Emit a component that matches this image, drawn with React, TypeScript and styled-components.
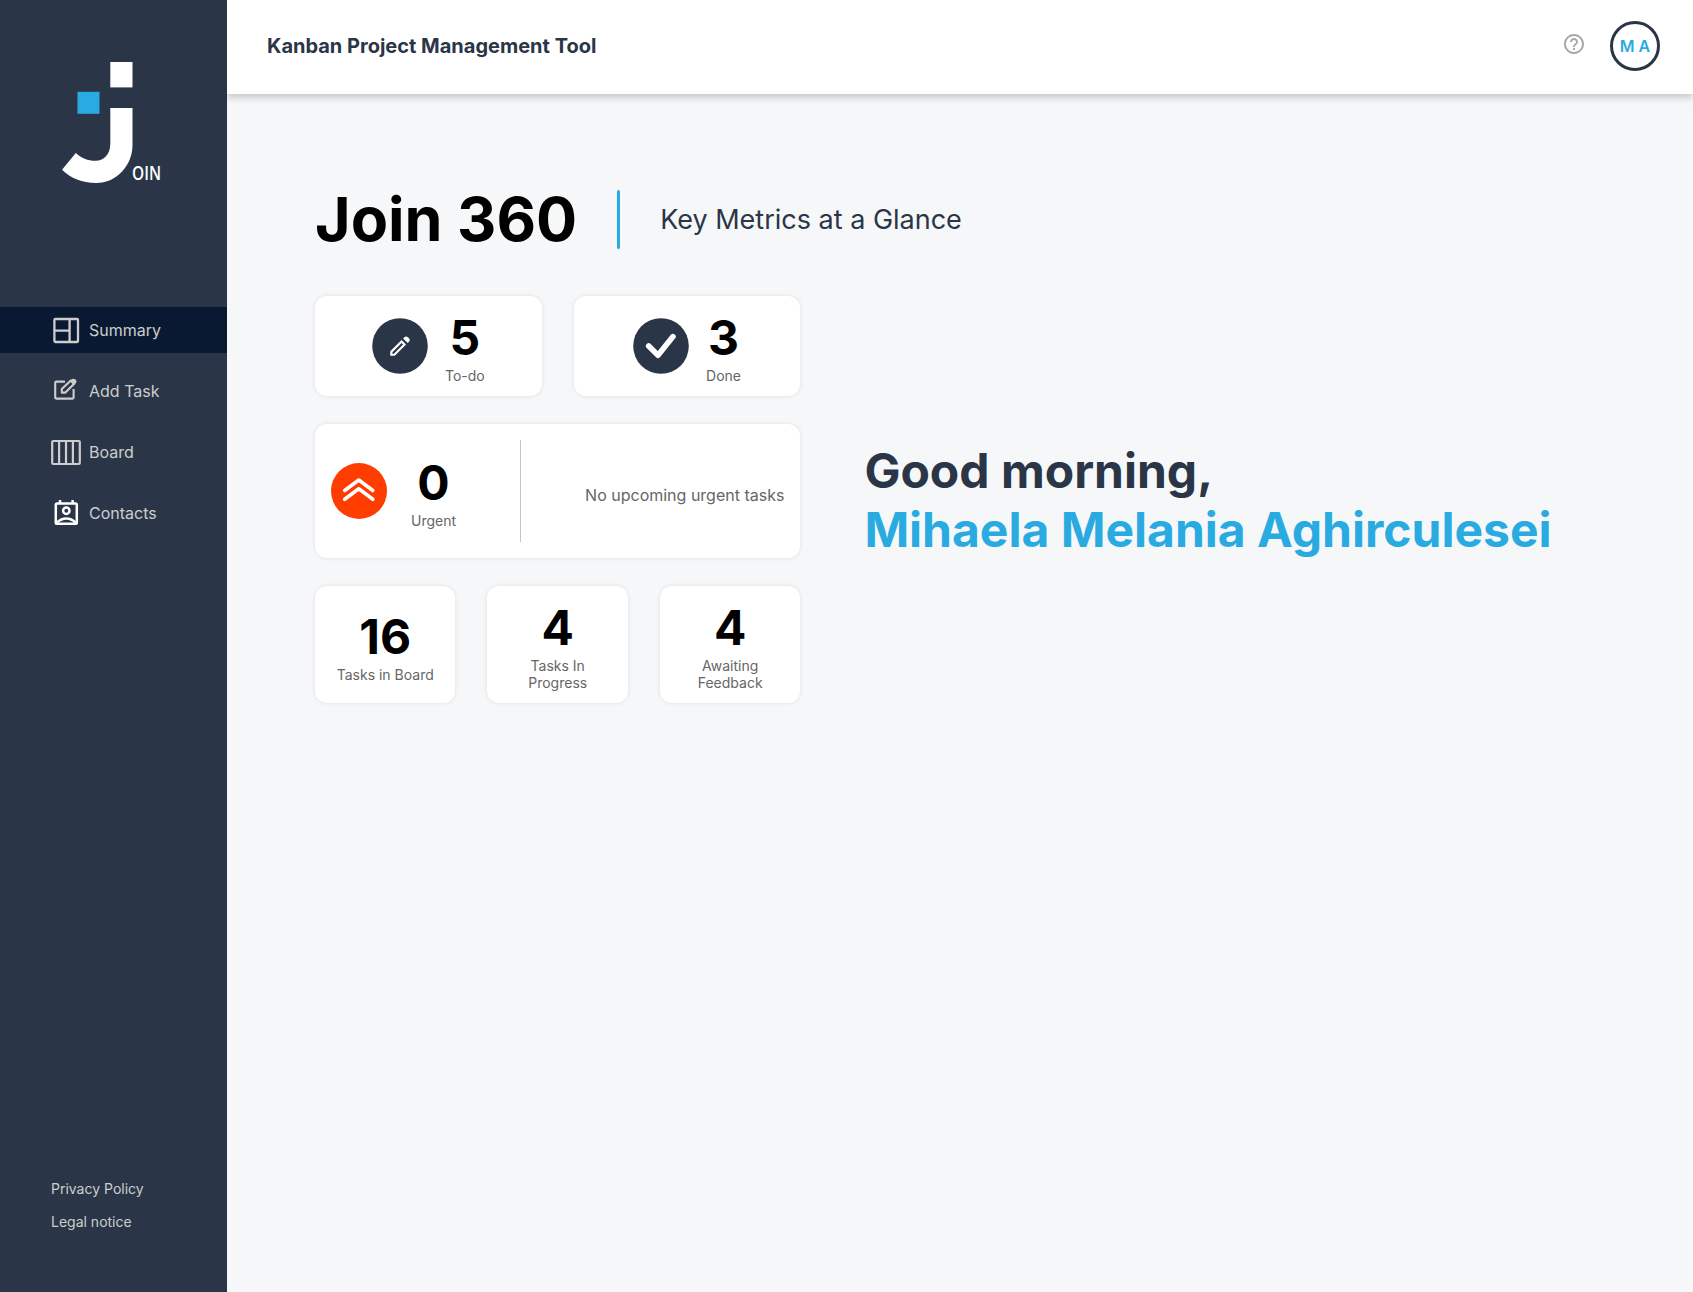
import React from "react";
import styled, { createGlobalStyle } from "styled-components";

const navy = "#2a3647";
const sky = "#29abe2";

const GlobalStyle = createGlobalStyle`
  *, *::before, *::after { box-sizing: border-box; }
  body {
    margin: 0;
    background: #f6f7f8;
    font-family: Inter, "Liberation Sans", sans-serif;
  }
  h1, h2, p { margin: 0; }
`;

const Page = styled.div`
  display: flex;
  height: 100vh;
  overflow: hidden;
`;

const Sidebar = styled.aside`
  display: flex;
  flex-direction: column;
  width: 227px;
  flex: none;
  padding: 62px 0 54px;
  background: ${navy};
  z-index: 1;
`;

const LogoWrap = styled.div`
  height: 122px;
  padding-left: 61px;
  margin-bottom: 123px;
  svg { display: block; overflow: visible; }
`;

const Nav = styled.nav`
  display: flex;
  flex-direction: column;
  gap: 15px;
`;

const NavItem = styled.a<{ $active?: boolean }>`
  display: flex;
  align-items: center;
  gap: 8px;
  height: 46px;
  padding-left: 51px;
  background: ${(p) => (p.$active ? "#091931" : "transparent")};
  color: #cdcdcd;
  font-size: 16px;
  line-height: 19px;
  svg { flex: none; }
`;

const LegalLinks = styled.div`
  display: flex;
  flex-direction: column;
  gap: 16px;
  margin-top: auto;
  padding: 0 0 8px 51px;
`;

const LegalLink = styled.a`
  color: #cdcdcd;
  font-size: 14px;
  line-height: 17px;
`;

const Main = styled.div`
  display: flex;
  flex-direction: column;
  flex: 1;
  min-width: 0;
`;

const Header = styled.header`
  display: flex;
  align-items: center;
  height: 94px;
  flex: none;
  padding: 0 33px 2px 40px;
  background: #fff;
  box-shadow: 0 3px 8px rgba(0, 0, 0, 0.22);
`;

const AppTitle = styled.span`
  color: ${navy};
  font-size: 20px;
  font-weight: 700;
  line-height: 24px;
`;

const HelpLink = styled.a`
  display: flex;
  margin: 0 26px 4px auto;
`;

const Avatar = styled.div`
  display: flex;
  align-items: center;
  justify-content: center;
  width: 50px;
  height: 50px;
  border: 3px solid ${navy};
  border-radius: 50%;
  color: ${sky};
  font-size: 16px;
  font-weight: 600;
`;

const Content = styled.main`
  padding: 96px 0 0 88px;
`;

const Heading = styled.div`
  display: flex;
  align-items: center;
  height: 59px;
  margin-bottom: 47px;
`;

const Title = styled.h1`
  padding-bottom: 2px;
  font-size: 61px;
  font-weight: 700;
  line-height: 74px;
`;

const TitleDivider = styled.div`
  width: 3px;
  height: 59px;
  margin: 0 40px;
  border-radius: 3px;
  background: ${sky};
`;

const Subtitle = styled.h2`
  color: ${navy};
  font-size: 27px;
  font-weight: 400;
  line-height: 33px;
`;

const Overview = styled.div`
  display: flex;
  align-items: center;
  gap: 64px;
`;

const Metrics = styled.div`
  display: flex;
  flex-direction: column;
  gap: 28px;
  width: 485.4px;
  flex: none;
`;

const MetricRow = styled.div<{ $height: number }>`
  display: flex;
  gap: 32px;
  height: ${(p) => p.$height}px;
`;

const Card = styled.div<{ $gap?: number; $wide?: boolean }>`
  display: flex;
  flex: 1 1 0;
  align-items: center;
  justify-content: ${(p) => (p.$wide ? "flex-start" : "center")};
  gap: ${(p) => p.$gap ?? 0}px;
  min-width: 0;
  padding: ${(p) => (p.$wide ? "16px" : "0 16px")};
  border-radius: 12px;
  background: #fff;
  box-shadow: 0 0 4px rgba(0, 0, 0, 0.1);
  svg { flex: none; }
`;

const Stat = styled.div<{ $drop?: number }>`
  display: flex;
  flex-direction: column;
  align-items: center;
  padding-top: ${(p) => p.$drop ?? 0}px;
  text-align: center;
`;

const StatValue = styled.span`
  font-size: 48px;
  font-weight: 700;
  line-height: 58px;
`;

const StatLabel = styled.span<{ $narrow?: boolean }>`
  width: ${(p) => (p.$narrow ? "80px" : "auto")};
  color: #666;
  font-size: 14px;
  line-height: 17px;
`;

const UrgentGroup = styled.div`
  display: flex;
  align-items: center;
  gap: 24px;
  width: 150px;
`;

const CardDivider = styled.div`
  align-self: stretch;
  width: 1px;
  margin-left: 39px;
  background: #c4c4c4;
`;

const Deadline = styled.p`
  margin-left: auto;
  padding-top: 9px;
  color: #666;
  font-size: 16px;
  line-height: 19px;
`;

const Greeting = styled.div`
  color: ${navy};
  font-size: 48px;
  font-weight: 700;
  line-height: 59px;
  white-space: nowrap;
`;

const UserName = styled.div`
  color: ${sky};
`;

const Logo = () => (
  <svg width="104" height="122" viewBox="61 62 104 122">
    <path fill="#fff" d="M110.3 62h22.2v25.4h-22.2z" />
    <path fill={sky} d="M77.5 91.8h22v22h-22z" />
    <path
      fill="#fff"
      d="M110.3 108h22.2v37C132.5 165 117 183 96 183 82 183 71 178.5 62 169.8L75.8 153C81.5 158.2 87.5 160.8 95.5 160.8 104.5 160.8 110.3 154 110.3 143.5z"
    />
    <text
      x="132"
      y="179.6"
      fill="#fff"
      fontFamily="'Open Sans', sans-serif"
      fontSize="19"
      fontWeight="600"
      textLength="29"
      lengthAdjust="spacingAndGlyphs"
    >
      OIN
    </text>
  </svg>
);

const SummaryIcon = () => (
  <svg width="30" height="30" viewBox="0 0 30 30" fill="none" stroke="#cdcdcd" strokeWidth="2.3">
    <rect x="3.4" y="4" width="23.6" height="23" rx="1" />
    <path d="M18.6 4v23M3.4 15.6h15.2" />
  </svg>
);

const AddTaskIcon = () => (
  <svg width="30" height="30" viewBox="0 0 30 30">
    <path
      d="M14 5.6H5.2a1 1 0 0 0-1 1v15a1 1 0 0 0 1 1h16.4a1 1 0 0 0 1-1V13"
      fill="none"
      stroke="#cdcdcd"
      strokeWidth="2.1"
    />
    <path d="M10.8 16.6v-3.6l9-8.6 3.4 3.4-8.8 8.8z" fill="none" stroke="#cdcdcd" strokeWidth="2.1" strokeLinejoin="round" />
    <path d="M18.8 5.2l2.4-2.1q1.5-1 3 .2l.8.8q1.2 1.5 0 2.9l-2.2 2.2z" fill="#cdcdcd" />
  </svg>
);

const BoardIcon = () => (
  <svg width="30" height="30" viewBox="0 0 30 30" fill="none" stroke="#cdcdcd" strokeWidth="2.2">
    <rect x="1.2" y="4" width="27.6" height="23" rx="1" />
    <path d="M8.1 4v23M15 4v23M21.9 4v23" />
  </svg>
);

const ContactsIcon = () => (
  <svg width="30" height="30" viewBox="0 0 30 30" fill="none" stroke="#fff" strokeWidth="2.5">
    <rect x="4.8" y="5.4" width="21" height="20.4" rx="1.4" />
    <path d="M9 2v4M21.6 2v4" />
    <circle cx="15.3" cy="12.7" r="3.2" />
    <path d="M6 24.5q4.2-4 9.3-4t9.3 4" />
  </svg>
);

const HelpIcon = () => (
  <svg width="20" height="20" viewBox="2 2 20 20" fill="#a8a8a8">
    <path d="M11 18h2v-2h-2v2zm1-16C6.48 2 2 6.48 2 12s4.48 10 10 10 10-4.48 10-10S17.52 2 12 2zm0 18c-4.41 0-8-3.59-8-8s3.59-8 8-8 8 3.59 8 8-3.59 8-8 8zm0-14c-2.21 0-4 1.79-4 4h2c0-1.1.9-2 2-2s2 .9 2 2c0 2-3 1.75-3 5h2c0-2.25 3-2.5 3-5 0-2.21-1.79-4-4-4z" />
  </svg>
);

const PencilIcon = () => (
  <svg width="56" height="56" viewBox="0 0 56 56">
    <circle cx="28" cy="28" r="27.8" fill={navy} />
    <path
      transform="translate(18.1 18.1) scale(.8)"
      fill="#fff"
      d="M2.87 22.02h1.87l11.5-11.5-1.87-1.87-11.5 11.5v1.87zM21.94 8.58l-5.67-5.6 1.87-1.86c.51-.52 1.14-.77 1.88-.77.75 0 1.37.25 1.88.77l1.87 1.86c.51.51.78 1.13.8 1.85.02.72-.22 1.34-.73 1.85l-1.9 1.9zM20 10.55L5.87 24.68H.2v-5.66L14.34 4.88 20 10.55z"
    />
  </svg>
);

const CheckIcon = () => (
  <svg width="56" height="56" viewBox="0 0 56 56">
    <circle cx="28" cy="28" r="27.8" fill={navy} />
    <path d="M15.7 28l9.3 9.3L40 18.6" fill="none" stroke="#fff" strokeWidth="5.6" strokeLinecap="round" strokeLinejoin="round" />
  </svg>
);

const UrgentIcon = () => (
  <svg width="56" height="56" viewBox="0 0 56 56">
    <circle cx="28" cy="28" r="28" fill="#ff3d00" />
    <path
      d="M13.7 27.5L27.8 17l14 10.5M13.7 36.3L27.8 25.8l14 10.5"
      fill="none"
      stroke="#fff"
      strokeWidth="3.6"
      strokeLinecap="round"
      strokeLinejoin="round"
    />
  </svg>
);

export default function App() {
  return (
    <>
      <GlobalStyle />
      <Page>
        <Sidebar>
          <LogoWrap><Logo /></LogoWrap>
          <Nav>
            <NavItem $active><SummaryIcon />Summary</NavItem>
            <NavItem><AddTaskIcon />Add Task</NavItem>
            <NavItem><BoardIcon />Board</NavItem>
            <NavItem><ContactsIcon />Contacts</NavItem>
          </Nav>
          <LegalLinks>
            <LegalLink>Privacy Policy</LegalLink>
            <LegalLink>Legal notice</LegalLink>
          </LegalLinks>
        </Sidebar>
        <Main>
          <Header>
            <AppTitle>Kanban Project Management Tool</AppTitle>
            <HelpLink><HelpIcon /></HelpLink>
            <Avatar>M A</Avatar>
          </Header>
          <Content>
            <Heading>
              <Title>Join 360</Title>
              <TitleDivider />
              <Subtitle>Key Metrics at a Glance</Subtitle>
            </Heading>
            <Overview>
              <Metrics>
                <MetricRow $height={100}>
                  <Card $gap={17}>
                    <PencilIcon />
                    <Stat><StatValue>5</StatValue><StatLabel>To-do</StatLabel></Stat>
                  </Card>
                  <Card $gap={17}>
                    <CheckIcon />
                    <Stat><StatValue>3</StatValue><StatLabel>Done</StatLabel></Stat>
                  </Card>
                </MetricRow>
                <MetricRow $height={134}>
                  <Card $wide>
                    <UrgentGroup>
                      <UrgentIcon />
                      <Stat><StatValue>0</StatValue><StatLabel>Urgent</StatLabel></Stat>
                    </UrgentGroup>
                    <CardDivider />
                    <Deadline>No upcoming urgent tasks</Deadline>
                  </Card>
                </MetricRow>
                <MetricRow $height={117}>
                  <Card>
                    <Stat $drop={2}><StatValue>16</StatValue><StatLabel>Tasks in Board</StatLabel></Stat>
                  </Card>
                  <Card>
                    <Stat><StatValue>4</StatValue><StatLabel $narrow>Tasks In Progress</StatLabel></Stat>
                  </Card>
                  <Card>
                    <Stat><StatValue>4</StatValue><StatLabel $narrow>Awaiting Feedback</StatLabel></Stat>
                  </Card>
                </MetricRow>
              </Metrics>
              <Greeting>
                Good morning,
                <UserName>Mihaela Melania Aghirculesei</UserName>
              </Greeting>
            </Overview>
          </Content>
        </Main>
      </Page>
    </>
  );
}
